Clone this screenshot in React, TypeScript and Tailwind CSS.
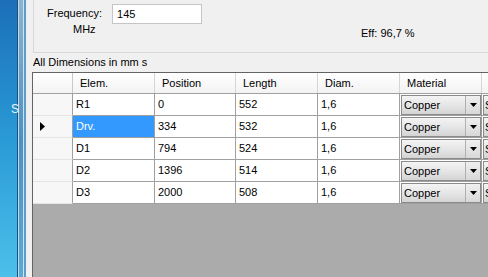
import React from 'react';

const rows = [
  { elem: 'R1', pos: '0', len: '552', diam: '1,6' },
  { elem: 'Drv.', pos: '334', len: '532', diam: '1,6', current: true },
  { elem: 'D1', pos: '794', len: '524', diam: '1,6' },
  { elem: 'D2', pos: '1396', len: '514', diam: '1,6' },
  { elem: 'D3', pos: '2000', len: '508', diam: '1,6' },
];

const Combo = () => (
  <div className="mx-[1px] my-[1px] flex h-[20px] w-[80px] border border-[#8a8a8a] bg-gradient-to-b from-[#f4f4f4] via-[#e6e6e6] to-[#d4d4d4]">
    <span className="flex-1 pl-[2px] leading-[18px]">Copper</span>
    <span className="flex w-[15px] items-center justify-center border-l border-[#b0b0b0] bg-gradient-to-b from-[#f0f0f0] to-[#d8d8d8]">
      <svg width="7" height="4" viewBox="0 0 7 4">
        <path d="M0 0h7L3.5 4z" fill="#000" />
      </svg>
    </span>
  </div>
);

const App = () => {
  return (
    <div
      className="flex h-[277px] w-[488px] overflow-hidden bg-[#f0f0f0] text-[11px] text-black"
      style={{ fontFamily: '"Liberation Sans", Arial, sans-serif' }}
    >
      {/* background window edge */}
      <div className="flex h-full w-[26px] shrink-0">
        <div className="relative w-[17px] bg-gradient-to-b from-[#1c6fb8] via-[#2a9ad6] to-[#4cc0ea]">
          <span className="absolute left-[11px] top-[100px] text-[12px] text-[#e8f4fb]">S</span>
        </div>
        <div className="w-[1px] bg-[#1d4f78]" />
        <div className="w-[1px] bg-[#b8dcef]" />
        <div className="w-[4px] bg-gradient-to-b from-[#8fb3cc] via-[#4f8fbf] to-[#5aa9d6]" />
        <div className="w-[1px] bg-[#c9e4f2]" />
        <div className="w-[2px] bg-[#5f9dc6]" />
      </div>

      <div className="flex min-w-0 flex-1 flex-col pl-[6px]">
        {/* group box */}
        <div className="ml-[1px] flex h-[53px] shrink-0 border-b border-l border-[#d8d8d8]">
          <div className="flex flex-col pl-[13px] pt-[6px]">
            <span className="leading-[14px]">Frequency:</span>
            <span className="ml-[26px] mt-[2px] leading-[14px]">MHz</span>
          </div>
          <div className="ml-[10px] mt-[4px] h-[20px] w-[90px] border border-[#c5c5c5] bg-white pl-[4px] leading-[18px]">
            145
          </div>
          <span className="ml-[159px] mt-[26px] leading-[14px]">Eff: 96,7 %</span>
        </div>

        <div className="h-[19px] shrink-0 pl-[1px] pt-[2px] leading-[14px]">All Dimensions in mm s</div>

        {/* data grid */}
        <div className="flex-1 border-l border-t border-[#646464] bg-[#ababab]">
          <div className="flex h-[21px] border-b border-[#a0a0a0] bg-gradient-to-b from-white to-[#f3f3f3]">
            <div className="w-[40px] shrink-0 border-r border-[#c8c8c8]" />
            <div className="w-[82px] shrink-0 border-r border-[#d5d5d5] pl-[7px] leading-[20px]">Elem.</div>
            <div className="w-[81px] shrink-0 border-r border-[#d5d5d5] pl-[7px] leading-[20px]">Position</div>
            <div className="w-[82px] shrink-0 border-r border-[#d5d5d5] pl-[7px] leading-[20px]">Length</div>
            <div className="w-[82px] shrink-0 border-r border-[#d5d5d5] pl-[7px] leading-[20px]">Diam.</div>
            <div className="w-[82px] shrink-0 border-r border-[#d5d5d5] pl-[7px] leading-[20px]">Material</div>
            <div className="flex-1" />
          </div>
          {rows.map((r) => (
            <div key={r.elem} className="flex h-[22px] bg-white">
              <div className="flex w-[40px] shrink-0 items-center border-b border-r border-[#a0a0a0] border-b-[#e4e4e4] bg-[#f7f7f7] pl-[7px]">
                {r.current && (
                  <svg width="5" height="9" viewBox="0 0 5 9">
                    <path d="M0 0L5 4.5L0 9z" fill="#000" />
                  </svg>
                )}
              </div>
              <div
                className={`w-[82px] shrink-0 border-b border-r border-[#a0a0a0] pl-[3px] leading-[21px] ${
                  r.current ? 'bg-[#3399ff] text-white' : ''
                }`}
              >
                {r.elem}
              </div>
              <div className="w-[81px] shrink-0 border-b border-r border-[#a0a0a0] pl-[3px] leading-[21px]">{r.pos}</div>
              <div className="w-[82px] shrink-0 border-b border-r border-[#a0a0a0] pl-[3px] leading-[21px]">{r.len}</div>
              <div className="w-[82px] shrink-0 border-b border-r border-[#a0a0a0] pl-[3px] leading-[21px]">{r.diam}</div>
              <div className="w-[82px] shrink-0 border-b border-r border-[#a0a0a0]">
                <Combo />
              </div>
              <div className="flex-1 overflow-hidden border-b border-[#a0a0a0] py-[1px] pl-[1px]">
                <div className="h-[20px] border border-r-0 border-[#8a8a8a] bg-gradient-to-b from-[#f4f4f4] to-[#d4d4d4] pl-[1px] leading-[18px]">
                  S
                </div>
              </div>
            </div>
          ))}
        </div>
      </div>
    </div>
  );
};

export default App;
